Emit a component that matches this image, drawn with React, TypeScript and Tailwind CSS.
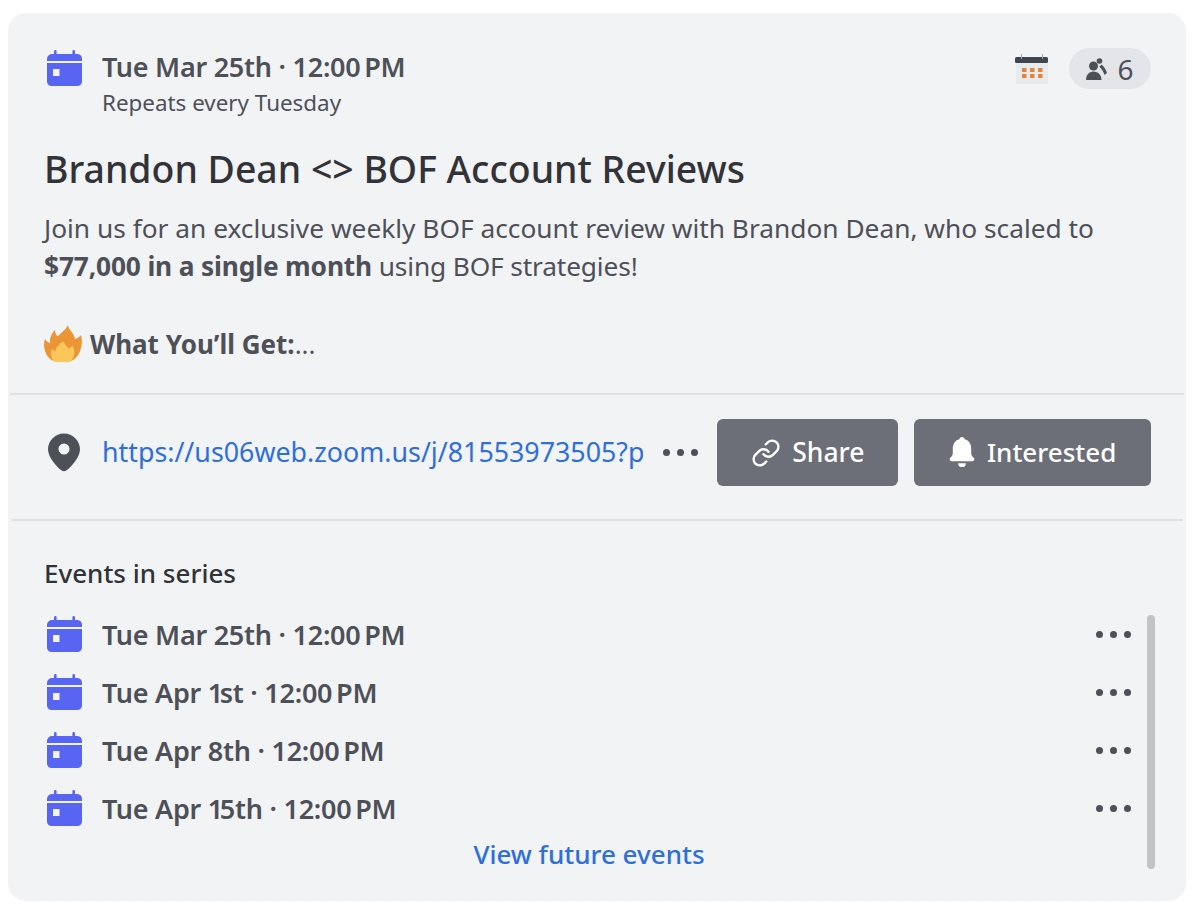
import React from "react";

function Cal() {
  return (
    <svg width="35" height="36" viewBox="0 0 35 36" className="shrink-0">
      <path fill="#5865f2" d="M7 1.300a1.300 1.300 0 0 1 2.600 0V4h15.800V1.300a1.300 1.300 0 0 1 2.600 0V4h2.500A5 5 0 0 1 35 9v2H0V9a5 5 0 0 1 5-5h2V1.300Z" />
      <path fill="#5865f2" fillRule="evenodd" d="M0 13h35v18.500a4.500 4.500 0 0 1-4.500 4.500h-26A4.500 4.500 0 0 1 0 31.500V13Zm6 6v7h6.500v-7H6Z" />
    </svg>
  );
}

function Dots({ className }: { className?: string }) {
  return (
    <div className={"flex gap-[7px] " + (className ?? "")}>
      <span className="w-[7px] h-[7px] rounded-full bg-[#4e5058]" />
      <span className="w-[7px] h-[7px] rounded-full bg-[#4e5058]" />
      <span className="w-[7px] h-[7px] rounded-full bg-[#4e5058]" />
    </div>
  );
}

function DateText({ pre, one, post }: { pre: string; one?: string; post: string }) {
  return (
    <span className="text-[27px] leading-[34px] font-semibold text-[#4e5058] tracking-[-0.25px] whitespace-nowrap">
      {pre}
      {one ? <span className="tracking-[-3.5px]">{one}</span> : null}
      {post} · <span className="[word-spacing:-3px]">12:00 PM</span>
    </span>
  );
}

const rows = [
  { pre: "Tue Mar 25th", post: "" },
  { pre: "Tue Apr ", one: "1", post: "st" },
  { pre: "Tue Apr 8th", post: "" },
  { pre: "Tue Apr ", one: "1", post: "5th" },
];

export default function App() {
  return (
    <div className="w-[1200px] h-[915px] bg-white pt-[13px] pl-[8px] font-['Noto_Sans','Liberation_Sans',sans-serif]">
      <div className="w-[1178px] h-[888px] bg-[#f2f3f5] rounded-[18px] flex flex-col overflow-hidden">
        <div className="h-[380px] shrink-0 pl-[36px] pr-[35px] pt-[37px] flex flex-col">
          <div className="flex items-start">
            <div className="ml-[3px] shrink-0"><Cal /></div>
            <div className="ml-[20px] flex flex-col grow">
              <DateText pre="Tue Mar 25th" post="" />
              <span className="mt-[4px] text-[22.400px] leading-[30px] text-[#4e5058]">Repeats every Tuesday</span>
            </div>
            <div className="flex items-center gap-[20px] -mt-[2px]">
              <svg width="34" height="30" viewBox="0 0 34 30" className="mt-[1px]">
                <rect x="1" y="4" width="32" height="26" fill="#e8ebec" />
                <rect x="0" y="3" width="33" height="6" rx="1.500" fill="#3f4652" />
                <rect x="6" y="0" width="1" height="5" fill="#a4a9b0" />
                <rect x="27" y="0" width="1" height="5" fill="#a4a9b0" />
                {[7, 15, 23].map((x) => [14, 20].map((y) => <rect key={x + "-" + y} x={x} y={y} width="4.500" height="4" rx="0.500" fill="#e5813f" />))}
              </svg>
              <div className="w-[82px] h-[41px] rounded-full bg-[#e3e5e8] flex items-center justify-center gap-[10px]">
                <svg width="21" height="22" viewBox="0 0 21 22" fill="#4e5058">
                  <circle cx="13.500" cy="3" r="2.800" />
                  <circle cx="7.500" cy="8" r="4.500" />
                  <path d="M0 22c0-5 3-8.500 7.500-8.500S15.500 17 15.500 22H0Z" />
                  <path d="M15.500 6.500c2.500 2 4.500 5 5.500 8.500l-2.500 2c-1-3.500-3-6.500-5.300-8.300.9-.5 1.800-1.300 2.300-2.200Z" />
                </svg>
                <span className="text-[28px] leading-none text-[#4e5058] font-normal">6</span>
              </div>
            </div>
          </div>
          <h1 className="mt-[27px] text-[37.400px] leading-[48px] font-medium text-[#313338] whitespace-nowrap">Brandon Dean &lt;&gt; BOF Account Reviews</h1>
          <p className="mt-[16px] text-[26.300px] leading-[38px] text-[#4e5058] whitespace-nowrap">
            Join us for an exclusive weekly BOF account review with Brandon Dean, who scaled to
            <br />
            <span className="tracking-[-0.15px]"><b className="font-bold">$77,000 in a single month</b> using BOF strategies!</span>
          </p>
          <div className="mt-[40px] flex items-center h-[38px]">
            <svg width="38" height="38" viewBox="0 0 38 38" className="shrink-0">
              <path fill="#ec9535" d="M24 0c.5 5 6 7.500 7 14 2-.5 4.500-2 6-4 1.500 5 1 11 -1 16-2.500 7-8 11-14 11h-7C9 37 3 33 1 26-.500 22 0 17 1 14c1 2 3 3.500 5 4-.5-5 2-10 5-13 0 3 1 5 3 6.500C16 8 22 5 24 0Z" />
              <path fill="#fbc75a" d="M20 17c.5 3 3 4 4.500 6.500 1.500-.5 3-1.500 4-3 2 4 2.500 8 1 11.500-1 3-3 5-6 5h-10c-3 0-5-2-6-5-1-3-.5-6 1-8.500.5 1.500 1.500 2.500 3 3 0-3 1.500-5 3.500-6.500.5-1 1-2.500 5.500-3.500Z" />
            </svg>
            <span className="ml-[8px] text-[26px] leading-[38px] font-bold text-[#4e5058]">What You’ll Get:</span>
            <span className="text-[26px] leading-[38px] text-[#4e5058]">...</span>
          </div>
        </div>

        <div className="h-[2px] mx-[2px] shrink-0 bg-[#dfe1e4]" />

        <div className="h-[124px] shrink-0 pl-[40px] pr-[35px] pt-[24px] pb-[33px] flex items-center">
          <svg width="32" height="39" viewBox="0 0 32 38" className="shrink-0">
            <path fill="#4e5058" fillRule="evenodd" d="M16 0C7.200 0 0 7.100 0 15.800c0 8.200 8.600 17.600 13.800 21.300 1.300.9 3.100.9 4.400 0C23.400 33.400 32 24 32 15.800 32 7.100 24.800 0 16 0Zm0 21a5.500 5.500 0 1 0 0-11 5.500 5.500 0 0 0 0 11Z" />
          </svg>
          <span className="ml-[22px] w-[542px] overflow-hidden whitespace-nowrap text-[26.800px] text-[#2e6fd9]">https://us06web.zoom.us/j/81553973505?p</span>
          <Dots className="ml-[20px]" />
          <button className="ml-[19px] w-[181px] h-[67px] rounded-[6px] bg-[#6d6f78] flex items-center justify-center gap-[11px] text-white text-[26.500px] font-medium">
            <svg width="30" height="30" viewBox="0 0 24 24" fill="none" stroke="#fff" strokeWidth="1.900" strokeLinecap="round" strokeLinejoin="round">
              <path d="M10 13a5 5 0 0 0 7.540.54l3-3a5 5 0 0 0-7.070-7.070l-1.720 1.710" />
              <path d="M14 11a5 5 0 0 0-7.540-.54l-3 3a5 5 0 0 0 7.070 7.070l1.710-1.710" />
            </svg>
            Share
          </button>
          <button className="ml-[16px] w-[237px] h-[67px] rounded-[6px] bg-[#6d6f78] flex items-center justify-center gap-[12px] text-white text-[26px] font-medium">
            <svg width="26" height="31" viewBox="0 0 26 32" fill="#fff">
              <path d="M13 0c1.500 0 2.500 1 2.700 2.300C20.300 3.500 22.500 7.500 22.500 12v5c0 2 1.500 3.500 3 5 .7 1 0 3-1.500 3H2c-1.500 0-2.200-2-1.500-3 1.500-1.500 3-3 3-5v-5c0-4.500 2.200-8.500 6.800-9.700C10.500 1 11.500 0 13 0Z" />
              <path d="M9 27h8a4 4 0 0 1-8 0Z" />
            </svg>
            Interested
          </button>
        </div>

        <div className="h-[2px] mx-[3px] shrink-0 bg-[#dfe1e4]" />

        <div className="relative grow pl-[36px] pr-[35px] pt-[34px]">
          <div className="text-[26px] leading-[36px] font-medium text-[#313338]">Events in series</div>
          <div className="mt-[25px] flex flex-col gap-[20px]">
            {rows.map((r, i) => (
              <div key={i} className="flex items-center h-[38px] pl-[3px] pr-[20px]">
                <div className="-mt-[2px]"><Cal /></div>
                <span className="ml-[20px] grow"><DateText pre={r.pre} one={r.one} post={r.post} /></span>
                <Dots className="-mt-[2px]" />
              </div>
            ))}
          </div>
          <div className="mt-[8px] text-center text-[26px] leading-[36px] font-medium text-[#2e6fd9] pr-[17px]">View future events</div>
          <div className="absolute top-[94px] right-[31px] w-[8px] h-[254px] rounded-full bg-[#c1c3c7]" />
        </div>
      </div>
    </div>
  );
}
